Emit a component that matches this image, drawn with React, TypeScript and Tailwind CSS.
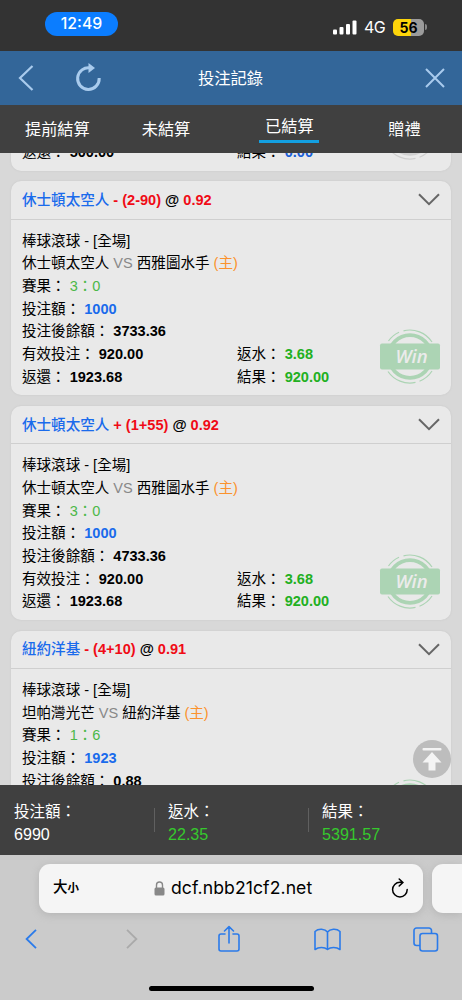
import type { ReactNode } from "react";

type Bet = {
  team: string;
  spread: string;
  odds: string;
  home: string;
  away: string;
  score: string;
  stake: string;
  balance: string;
  valid?: string;
  rebate?: string;
  payout?: string;
  result?: string;
};

const BETS: Bet[] = [
  {
    team: "休士頓太空人",
    spread: "- (2-90)",
    odds: "0.92",
    home: "休士頓太空人",
    away: "西雅圖水手",
    score: "3：0",
    stake: "1000",
    balance: "3733.36",
    valid: "920.00",
    rebate: "3.68",
    payout: "1923.68",
    result: "920.00",
  },
  {
    team: "休士頓太空人",
    spread: "+ (1+55)",
    odds: "0.92",
    home: "休士頓太空人",
    away: "西雅圖水手",
    score: "3：0",
    stake: "1000",
    balance: "4733.36",
    valid: "920.00",
    rebate: "3.68",
    payout: "1923.68",
    result: "920.00",
  },
  {
    team: "紐約洋基",
    spread: "- (4+10)",
    odds: "0.91",
    home: "坦帕灣光芒",
    away: "紐約洋基",
    score: "1：6",
    stake: "1923",
    balance: "0.88",
  },
];

const Stamp = ({ win = true }: { win?: boolean }) => (
  <svg
    className={`absolute top-[147px] right-[10px] h-[57px] w-[62px] ${win ? "text-[#acd4b4]" : "text-[#cfcfcf]"}`}
    viewBox="0 0 62 57"
    fill="none"
    stroke="currentColor"
  >
    <path d="M9.500 13A26.500 26.500 0 0 1 20 4.300M24.500 2.800A26.500 26.500 0 0 1 53 14M9 43.500A26.500 26.500 0 0 0 36.500 54.400M40.500 53.200A26.500 26.500 0 0 0 53 43" strokeWidth="1.2" />
    <circle cx="31" cy="28.5" r="21.3" strokeWidth="3.8" />
    {win && (
      <>
        <rect x="1" y="15.5" width="60" height="26" rx="2" fill="currentColor" stroke="none" />
        <text
          x="32.5"
          y="35"
          textAnchor="middle"
          fill="#ebebeb"
          stroke="none"
          className="font-['Open_Sans',sans-serif] text-[18.5px] font-semibold italic"
        >
          Win
        </text>
      </>
    )}
  </svg>
);

const Row = ({ label, children }: { label: string; children: ReactNode }) => (
  <p>
    {label}： {children}
  </p>
);

const Settled = ({ valid, rebate, payout, result, color }: Partial<Bet> & { color: string }) => (
  <div className="grid grid-cols-[215px_1fr]">
    {valid && (
      <>
        <Row label="有效投注">
          <b>{valid}</b>
        </Row>
        <Row label="返水">
          <b className={color}>{rebate}</b>
        </Row>
      </>
    )}
    <Row label="返還">
      <b>{payout}</b>
    </Row>
    <Row label="結果">
      <b className={color}>{result}</b>
    </Row>
  </div>
);

const BetCard = ({ bet }: { bet: Bet }) => (
  <article className="relative h-[214.2px] shrink-0 rounded-[10px] bg-[#e9e9e9] shadow-[0_0_2px_#c4c4c4]">
    <header className="flex h-[38.5px] items-center justify-between border-b border-[#cfcfcf] pr-[11px] pl-[11px]">
      <h2 className="pt-[2px] font-bold text-[#f00b16]">
        <span className="font-medium text-[#1a6bec]">{bet.team}</span> {bet.spread}{" "}
        <span className="text-black">@</span> {bet.odds}
      </h2>
      <svg className="h-[13px] w-[22px]" viewBox="0 0 22 13" fill="none" stroke="#666" strokeWidth="2">
        <path d="M1 1.2 11 11.2 21 1.2" />
      </svg>
    </header>
    <div className="px-[11px] pt-[10px] leading-[22.65px]">
      <p>棒球滾球 - [全場]</p>
      <p>
        {bet.home} <span className="text-[#888]">VS</span> {bet.away} <span className="text-[#fb922d]">(主)</span>
      </p>
      <Row label="賽果">
        <span className="text-[#4cb848]">{bet.score}</span>
      </Row>
      <Row label="投注額">
        <b className="text-[#1a6bec]">{bet.stake}</b>
      </Row>
      <Row label="投注後餘額">
        <b>{bet.balance}</b>
      </Row>
      {bet.payout && <Settled {...bet} color="text-[#22b022]" />}
    </div>
    <Stamp />
  </article>
);

const StatusBar = () => (
  <div className="flex h-[51px] shrink-0 items-start justify-between bg-[#333] pr-[35px] pl-[45px] font-[Inter,sans-serif] text-white">
    <span className="mt-[12px] flex h-[24px] w-[73px] items-center justify-center rounded-full bg-[#0b7dff] text-[15.8px] font-medium">
      12:49
    </span>
    <div className="mt-[15px] flex items-center">
      <svg className="h-[16px] w-[24px]" viewBox="0 0 24 16" fill="white">
        <rect x="0" y="10.5" width="4" height="5" rx="1" />
        <rect x="6.5" y="8" width="4" height="7.5" rx="1" />
        <rect x="13" y="5" width="4" height="10.5" rx="1" />
        <rect x="19.5" y="1.5" width="4" height="14" rx="1" />
      </svg>
      <span className="ml-[7px] w-[29px] text-[16px] tracking-[-0.5px]">4G</span>
      <span className="flex h-[17px] w-[31px] items-center justify-center rounded-[5px] bg-linear-to-r from-[#fdd50a] from-57% to-[#9b9b9b] to-57% text-[14px] font-bold text-black">
        56
      </span>
      <span className="ml-[1px] h-[6px] w-[2px] rounded-r-full bg-[#888]" />
    </div>
  </div>
);

const TitleBar = () => (
  <div className="flex h-[54px] shrink-0 items-center bg-[#336699] pr-[17px] pl-[18px] text-[#a9cbed]">
    <svg className="h-[28px] w-[16px]" viewBox="0 0 16 28" fill="none" stroke="currentColor" strokeWidth="2.2">
      <path d="M14.5 2 2 14 14.5 26" />
    </svg>
    <svg className="ml-[41px] h-[30px] w-[28px]" viewBox="0 0 28 30" fill="none">
      <path d="M24.200 15A10.800 10.800 0 1 1 15.500 5" stroke="currentColor" strokeWidth="3" />
      <path d="M13.500 0v10l6.500-5z" fill="currentColor" />
    </svg>
    <h1 className="ml-[95px] text-[16.3px] text-white">投注記錄</h1>
    <svg className="ml-auto h-[20px] w-[20px]" viewBox="0 0 20 20" stroke="currentColor" strokeWidth="2">
      <path d="M1 1 19 19M19 1 1 19" />
    </svg>
  </div>
);

const Tabs = () => (
  <nav className="flex h-[48px] shrink-0 items-center bg-[#404040] pl-[25px] text-[16.2px] leading-[24px] text-white">
    <span>提前結算</span>
    <span className="ml-[52px]">未結算</span>
    <span className="mb-[1px] ml-[69px] w-[60px] border-b-3 border-[#139fe0] pb-[1px] text-center leading-[25px]">
      已結算
    </span>
    <span className="ml-[69px]">贈禮</span>
  </nav>
);

const TOTALS = [
  { label: "投注額", value: "6990", color: "text-white" },
  { label: "返水", value: "22.35", color: "text-[#36c92d]" },
  { label: "結果", value: "5391.57", color: "text-[#36c92d]" },
];

const Totals = () => (
  <div className="grid h-[70px] shrink-0 grid-cols-3 items-center bg-[#404040] text-[15.5px] leading-[22px] text-white">
    {TOTALS.map((total, i) => (
      <div key={total.label} className="flex items-center">
        <span className={`h-[24px] w-px ${i ? "bg-[#606060]" : ""}`} />
        <div className="pt-[6px] pl-[13px]">
          <p>{total.label}：</p>
          <p className={`text-[16.1px] ${total.color}`}>{total.value}</p>
        </div>
      </div>
    ))}
  </div>
);

const BrowserBar = () => (
  <footer className="flex h-[145px] shrink-0 flex-col bg-[#cbcbcb]">
    <div className="mt-[9px] flex gap-[9px] pl-[39px] text-black">
      <div className="flex h-[48.5px] w-[384px] shrink-0 items-center rounded-[11px] bg-[#f5f5f5] px-[14px] shadow-[0_2px_8px_#b4b4b4]">
        <span className="w-[27px] text-[14.5px] font-medium">
          大<span className="text-[11.5px] font-bold">小</span>
        </span>
        <svg className="ml-[74px] h-[15px] w-[11px]" viewBox="0 0 11 15" fill="#888">
          <rect x="0.5" y="6.5" width="10" height="8" rx="1.5" />
          <path d="M2.5 7V4a3 3 0 0 1 6 0v3" fill="none" stroke="#888" strokeWidth="1.4" />
        </svg>
        <span className="ml-[6px] font-[Inter,sans-serif] text-[17.6px] tracking-[0.08px]">dcf.nbb21cf2.net</span>
        <svg className="ml-auto h-[21px] w-[18px]" viewBox="0 0 18 21" fill="none" stroke="black" strokeWidth="1.5">
          <path d="M16.2 11.5a7.3 7.3 0 1 1-7.3-7.2h2.6M8.2 1l3.7 3.4L8.2 8" strokeLinecap="round" />
        </svg>
      </div>
      <div className="h-[48.5px] flex-1 rounded-l-[11px] bg-[#f5f5f5] shadow-[0_2px_8px_#b4b4b4]" />
    </div>
    <div className="mt-[10.5px] flex h-[32px] items-center pl-[25px] text-[#2b7bea]">
      <svg className="h-[20px] w-[12px]" viewBox="0 0 12 20" fill="none" stroke="currentColor" strokeWidth="1.8">
        <path d="M11 .8 1.6 10 11 19.2" />
      </svg>
      <svg className="ml-[89px] h-[20px] w-[12px]" viewBox="0 0 12 20" fill="none" stroke="#aaa" strokeWidth="1.8">
        <path d="M1 .8 10.4 10 1 19.2" />
      </svg>
      <svg
        className="ml-[80px] h-[28px] w-[22px]"
        viewBox="0 0 22 28"
        fill="none"
        stroke="currentColor"
        strokeWidth="1.6"
        strokeLinecap="round"
        strokeLinejoin="round"
      >
        <path d="M7 9H3a2 2 0 0 0-2 2v13a2 2 0 0 0 2 2h16a2 2 0 0 0 2-2V11a2 2 0 0 0-2-2h-4M11 18V2M6.5 6 11 1.6 15.500 6" />
      </svg>
      <svg
        className="ml-[74px] h-[23px] w-[27px]"
        viewBox="0 0 27 23"
        fill="none"
        stroke="currentColor"
        strokeWidth="1.6"
        strokeLinejoin="round"
      >
        <path d="M13.500 4C11 .7 4.500.2 1 3.500V21.500C4.500 18.800 10.500 18.800 13.500 21.500 16.500 18.800 22.500 18.800 26 21.500V3.500C22.500.2 16 .7 13.500 4ZM13.500 4V21.500" />
      </svg>
      <svg
        className="ml-[72px] h-[25px] w-[26px]"
        viewBox="0 0 26 25"
        fill="none"
        stroke="currentColor"
        strokeWidth="1.6"
      >
        <rect x="7" y="6.500" width="17.500" height="17.500" rx="2.500" />
        <path d="M7 18.500H3.500A2.500 2.500 0 0 1 1 16V3.500A2.500 2.500 0 0 1 3.500 1H16A2.500 2.500 0 0 1 18.500 3.500V6.500" />
      </svg>
    </div>
    <div className="mx-auto mt-[31px] h-[5px] w-[165px] rounded-full bg-black" />
  </footer>
);

export default function App() {
  return (
    <div
      lang="zh-TW"
      className="flex h-[1000px] w-[462px] flex-col overflow-hidden bg-[#d8d8d8] font-['Liberation_Sans','Noto_Sans_CJK_TC',sans-serif] text-[14.55px] text-black"
    >
      <StatusBar />
      <TitleBar />
      <Tabs />
      <main className="relative flex h-[632px] shrink-0 flex-col gap-[10.5px] overflow-hidden px-[11px]">
        {/* 捲動後只露出底部的上一筆 */}
        <article className="relative mt-[-196.500px] flex h-[214.2px] shrink-0 flex-col justify-end rounded-[10px] bg-[#e9e9e9] px-[11px] pb-[7px] leading-[22.65px] shadow-[0_0_2px_#c4c4c4]">
          <Settled payout="500.00" result="0.00" color="text-[#1a5fd8]" />
          <Stamp win={false} />
        </article>
        {BETS.map((bet) => (
          <BetCard key={bet.team + bet.spread} bet={bet} />
        ))}
        <button className="absolute right-[11px] bottom-[7px] flex size-[38px] items-center justify-center rounded-full bg-[#bdbdbd]">
          <svg className="h-[24px] w-[20px]" viewBox="0 0 20 24" fill="#f4f4f4">
            <rect x="0.5" y="1" width="19" height="2.600" rx="1" />
            <path d="M10 5 19.500 15.500H13.500V23.500H6.500V15.500H.5Z" />
          </svg>
        </button>
      </main>
      <Totals />
      <BrowserBar />
    </div>
  );
}
